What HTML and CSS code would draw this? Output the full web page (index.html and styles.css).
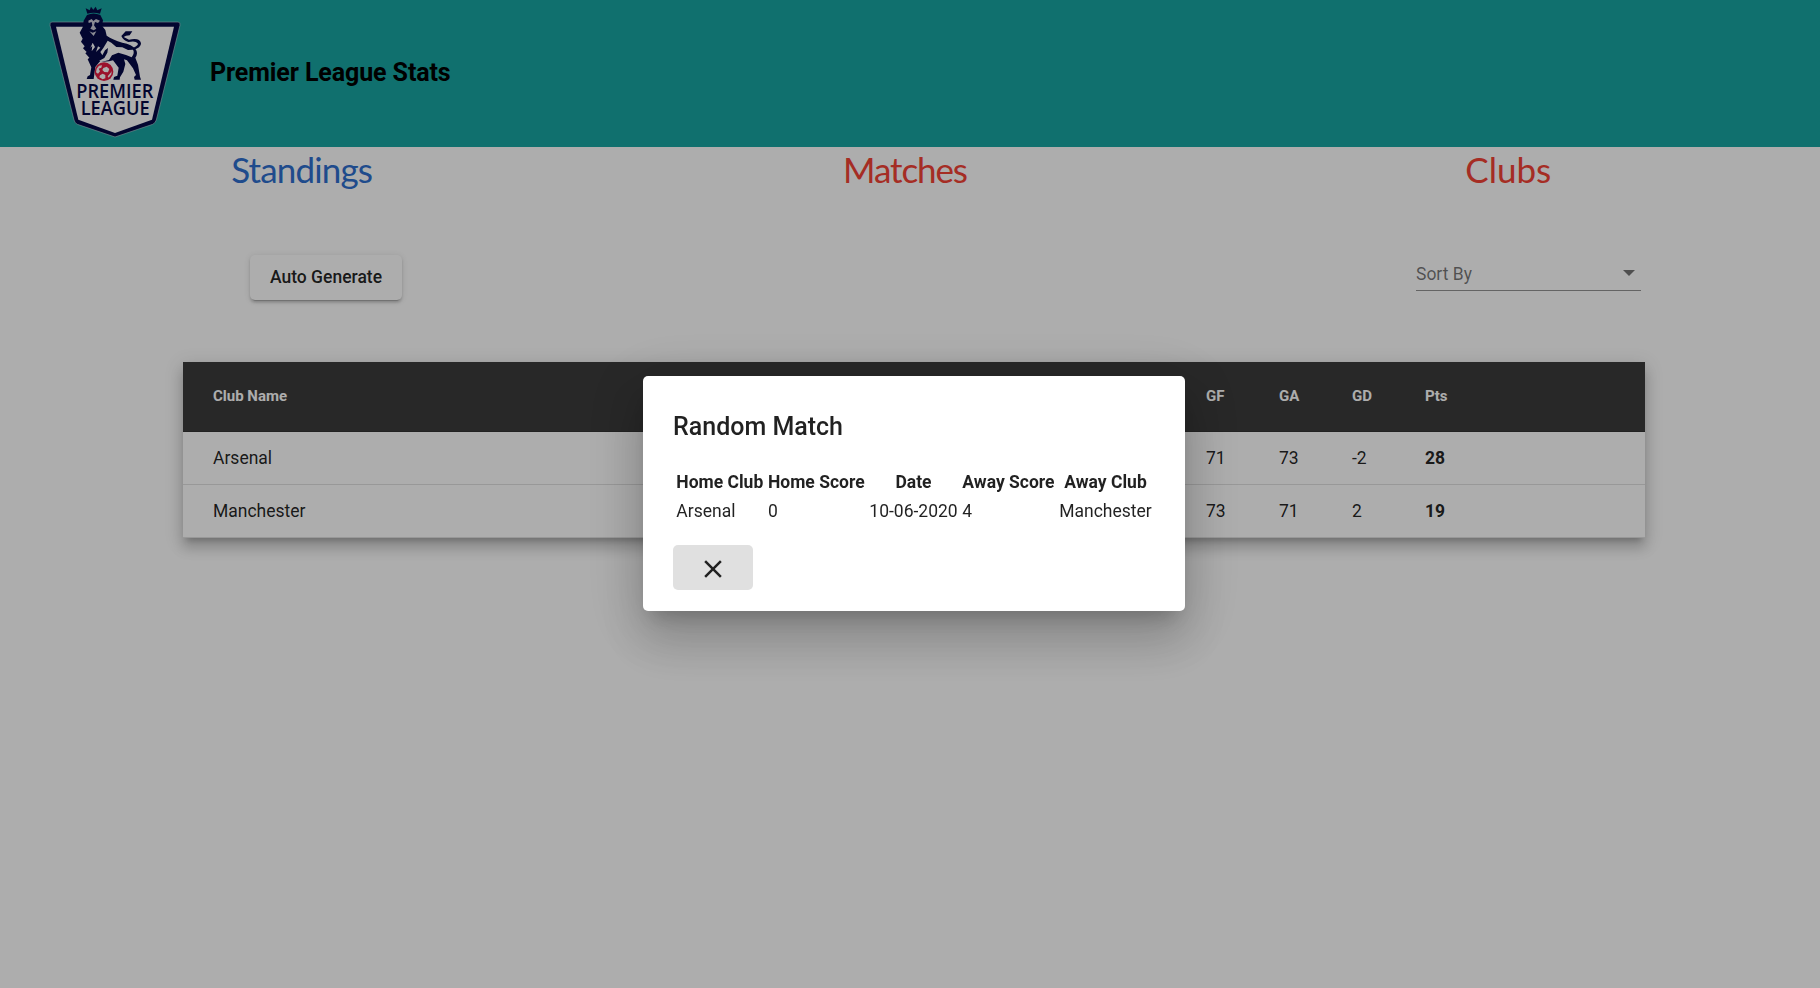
FILE: index.html
```html
<!DOCTYPE html>
<html lang="en">
<head>
<meta charset="utf-8">
<title>Premier League Stats</title>
<link rel="stylesheet" href="styles.css">
</head>
<body>
<header class="topbar">
  <svg class="logo" viewBox="0 0 450 441" aria-label="Premier League">
    <path d="M36 66H414Q422 66 420 76L349 360Q346 369 338 373L225 411L112 373Q104 369 102 360L30 76Q28 66 36 66Z" fill="#050a48" stroke="#a9c9ce" stroke-width="2"/>
    <path d="M48 80H402L336 359L225 399L115 359Z" fill="#fff"/>
    <g fill="#050a48">
      <path d="M142 41L137 25L149 31L153 20L160 29L167 20L172 31L185 25L180 41Q161 36 142 41Z"/>
      <path d="M141 45Q160 36 181 45L189 61L186 77L196 90L200 107Q218 119 247 128Q276 133 288 149Q295 160 286 173L294 194L300 230L303 239H284L282 231L288 225L279 205L261 181L252 178L256 192L250 215L240 232L239 239H220L222 231L232 227L236 203L219 181L207 184L178 186L166 201L161 237H140L143 229L150 225L154 202L143 178L148 173L136 160L140 156L129 145L134 139L123 125L128 116L119 98L128 82L131 62Z"/>
      <path d="M244 108L257 94H277L269 106L258 107L251 111L267 119Q300 112 303 130Q304 144 278 150L280 143Q297 136 293 130Q287 121 265 126Q250 122 244 108Z"/>
    </g>
    <path d="M145 62L155 57L160 63L168 57L180 62L174 69L165 66L162 76L169 86L161 91L151 86L157 76L155 66L146 69ZM148 94L158 98L169 94L161 108Z" fill="#fff" opacity=".8"/>
    <path d="M203 122L214 128L229 141L247 142L264 150L279 149Q285 158 275 172L258 165L235 158L216 166L207 180L181 187L178 182L193 174L202 158L204 144L195 151L187 166L181 156L190 144ZM158 128L151 144L157 137L155 154L165 141M174 139L168 156L181 143Z" fill="#fff"/>
    <circle cx="192" cy="215" r="28" fill="#e51b42"/>
    <path d="M170 206L177 197L186 196L184 203L176 206L180 214L174 221L168 217ZM190 204L200 200L208 207L204 217L193 216L187 210ZM180 226L188 221L196 225L196 235L188 238L178 232ZM212 218L215 213L214 223L206 233L203 229Z" fill="#fff"/>
    <g class="logo-text" fill="#050a48">
      <text x="109" y="293" textLength="231" lengthAdjust="spacingAndGlyphs">PREMIER</text>
      <text x="122" y="345" textLength="207" lengthAdjust="spacingAndGlyphs">LEAGUE</text>
    </g>
  </svg>
  <h1 class="title">Premier League Stats</h1>
</header>
<nav class="tabs">
  <a class="tab tab-active">Standings</a>
  <a class="tab tab-matches">Matches</a>
  <a class="tab tab-clubs">Clubs</a>
</nav>
<section class="controls">
  <button class="generate">Auto Generate</button>
  <div class="select"><span>Sort By</span><i class="arrow"></i></div>
</section>
<main class="standings">
  <div class="row head"><span>Club Name</span><span>GF</span><span>GA</span><span>GD</span><span>Pts</span></div>
  <div class="row"><span>Arsenal</span><span>71</span><span>73</span><span>-2</span><b>28</b></div>
  <div class="row"><span>Manchester</span><span>73</span><span>71</span><span>2</span><b>19</b></div>
</main>
<div class="backdrop">
  <div class="dialog">
    <h2 class="dialog-title">Random Match</h2>
    <table class="match">
      <tr><th>Home Club</th><th>Home Score</th><th>Date</th><th>Away Score</th><th>Away Club</th></tr>
      <tr><td>Arsenal</td><td>0</td><td>10-06-2020</td><td>4</td><td>Manchester</td></tr>
    </table>
    <button class="close" aria-label="Close">
      <svg width="30" height="30" viewBox="0 0 24 24"><path fill="#212121" d="M19 6.41L17.59 5 12 10.59 6.41 5 5 6.41 10.59 12 5 17.59 6.41 19 12 13.41 17.59 19 19 17.59 13.41 12z"/></svg>
    </button>
  </div>
</div>
</body>
</html>
```
FILE: styles.css
```css
* { box-sizing: border-box; }
body {
  margin: 0;
  height: 988px;
  overflow: hidden;
  background: #fff;
  color: rgba(0, 0, 0, .87);
  font: 17.5px Roboto, sans-serif;
}
.topbar {
  display: flex;
  height: 147px;
  padding-left: 40px;
  background: #18a5a2;
}
.logo { width: 150px; height: 147px; }
.logo-text { font: 600 60px "Open Sans", sans-serif; }
.title {
  margin: 58px 0 0 20px;
  font-size: 25px;
  line-height: 30px;
  font-weight: 700;
  letter-spacing: -.1px;
  color: #000;
}
.tabs {
  display: grid;
  grid-template-columns: repeat(3, 1fr);
  width: 1810px;
  height: 60px;
  text-align: center;
  font: 35px/44px Lato, sans-serif;
  color: #f44336;
}
.tab-active { color: #2f6fce; letter-spacing: -.85px; }
.tab-matches { letter-spacing: -1.1px; }
.tab-clubs { letter-spacing: 0; }
.controls {
  display: flex;
  justify-content: space-between;
  height: 155px;
  padding: 48px 179px 0 250px;
}
.generate {
  width: 152px;
  height: 45px;
  padding: 0 0 1px;
  border: 0;
  border-radius: 5px;
  background: #fff;
  color: rgba(0, 0, 0, .87);
  font: 500 17.5px Roboto, sans-serif;
  box-shadow: 0 4px 1px -3px rgba(0,0,0,.2), 0 2.5px 2.5px rgba(0,0,0,.14), 0 1px 6px rgba(0,0,0,.12);
}
.select {
  display: flex;
  justify-content: space-between;
  width: 225px;
  height: 36px;
  padding-top: 8px;
  border-bottom: 1px solid rgba(0, 0, 0, .42);
  color: rgba(0, 0, 0, .54);
  line-height: 22px;
}
.arrow {
  width: 12px;
  height: 6px;
  margin: 7px 6px 0 0;
  background: rgba(0, 0, 0, .54);
  clip-path: polygon(0 0, 100% 0, 50% 100%);
}
.standings {
  width: 1462px;
  margin-left: 183px;
  box-shadow: 0 6px 6px -4px rgba(0,0,0,.2), 0 10px 12px 1px rgba(0,0,0,.14), 0 4px 17px 2px rgba(0,0,0,.12);
}
.row {
  display: grid;
  grid-template-columns: 1fr 73px 73px 73px 220px;
  align-items: center;
  height: 53px;
  padding-left: 30px;
  background: #fff;
  border-bottom: 1px solid rgba(0, 0, 0, .12);
}
.head {
  height: 70px;
  padding-bottom: 2px;
  background: #3b3b3b;
  color: #fff;
  font-size: 15px;
  font-weight: 700;
}
.backdrop {
  position: fixed;
  inset: 0;
  display: flex;
  align-items: flex-start;
  justify-content: center;
  padding: 376px 0 0 8px;
  background: rgba(0, 0, 0, .32);
}
.dialog {
  width: 542px;
  height: 235px;
  padding: 31px 30px 29px;
  border-radius: 5px;
  background: #fff;
  box-shadow: 0 14px 19px -9px rgba(0,0,0,.2), 0 30px 47px 4px rgba(0,0,0,.14), 0 11px 57px 10px rgba(0,0,0,.12);
}
.dialog-title {
  margin: 0 0 20px;
  font-size: 25px;
  line-height: 40px;
  font-weight: 500;
}
.match {
  margin: 0 0 18.5px;
  border-spacing: 2.5px;
  line-height: 24px;
  white-space: nowrap;
}
.match th, .match td { padding: 1.25px 1.35px; }
.close {
  display: flex;
  align-items: center;
  justify-content: center;
  width: 80px;
  height: 45px;
  padding: 3px 0 0;
  border: 0;
  border-radius: 5px;
  background: #e0e0e0;
}
```
